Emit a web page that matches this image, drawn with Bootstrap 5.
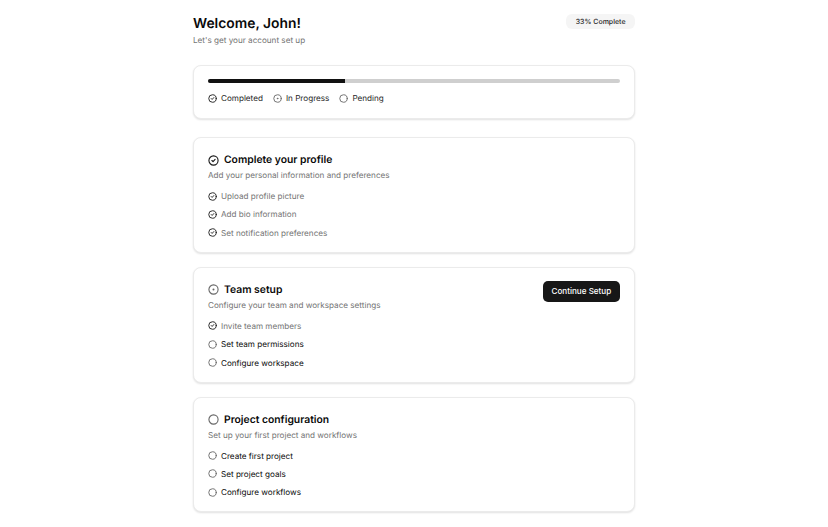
<!DOCTYPE html>
<html lang="en">

<head>
    <meta charset="UTF-8">
    <meta name="viewport" content="width=device-width, initial-scale=1">
    <title>Welcome</title>
    <link href="https://cdn.jsdelivr.net/npm/bootstrap@5.3.0/dist/css/bootstrap.min.css" rel="stylesheet">
    <style>
        body { font-family: Inter, "Liberation Sans", sans-serif; color: #0a0a0a; background: #fff; text-rendering: geometricPrecision; }
        .page-wrap { width: 442px; margin: 0 auto; padding-top: 14px; }
        .page-head { margin-bottom: 18px; }
        .page-title { font-size: 13.85px; font-weight: 600; line-height: 18px; margin: 1px 0 0; }
        .page-sub { font-size: 8.15px; line-height: 14px; color: #737373; }
        .pct-pill { background: #f5f5f5; border-radius: 6px; font-size: 7px; font-weight: 500; line-height: 9px; padding: 3px 9.5px; height: 15px; color: #262626; }
        .step-card { border: 1px solid #ebebeb; border-radius: 8px; box-shadow: 0 1px 2px rgba(0, 0, 0, .12); padding: 15px 14px 13px; background: #fff; margin-bottom: 14px; }
        .first-card { padding: 13px 14px 14px; margin-bottom: 18px; }
        .track { height: 4px; background: #cfcfcf; border-radius: 2px; overflow: hidden; }
        .track-fill { height: 100%; background: #111; }
        .legend-row { margin-top: 9px; font-size: 8.15px; line-height: 12px; color: #262626; gap: 10px; }
        .step-title { font-size: 10.35px; font-weight: 600; line-height: 14px; margin: 0; }
        .step-sub { font-size: 8.15px; line-height: 12px; color: #737373; margin-top: 2px; }
        .task-list { margin-top: 9px; display: flex; flex-direction: column; gap: 6.4px; font-size: 8.15px; line-height: 12px; }
        .task-row { display: flex; align-items: center; gap: 4px; }
        .head-row { display: flex; align-items: center; gap: 5px; }
        .task-done { color: #737373; }
        .ico { flex: none; fill: none; stroke: #171717; stroke-width: 2.4; stroke-linecap: round; stroke-linejoin: round; }
        .ico-muted { stroke: #666; }
        .btn-setup { background: #171717; color: #fff; font-size: 8.1px; font-weight: 500; line-height: 12px; padding: 4px 8.75px; border-radius: 5px; border: 0; height: 21px; margin-top: -2px; }
        .btn-setup:hover { background: #171717; color: #fff; }
    </style>
</head>

<body>
    <svg class="d-none">
        <symbol id="i-done" viewBox="0 0 24 24"><circle cx="12" cy="12" r="10"/><path d="m8.5 12 2.5 2.5 4.5-5"/></symbol>
        <symbol id="i-prog" viewBox="0 0 24 24"><circle cx="12" cy="12" r="10"/><circle cx="12" cy="12" r="1"/></symbol>
        <symbol id="i-todo" viewBox="0 0 24 24"><circle cx="12" cy="12" r="10"/></symbol>
    </svg>

    <div class="page-wrap">
        <div class="page-head d-flex justify-content-between align-items-start">
            <div>
                <h1 class="page-title">Welcome, John!</h1>
                <div class="page-sub">Let's get your account set up</div>
            </div>
            <span class="pct-pill">33% Complete</span>
        </div>

        <div class="step-card first-card">
            <div class="track"><div class="track-fill" style="width: 33.33%"></div></div>
            <div class="legend-row d-flex">
                <div class="task-row"><svg class="ico" width="9" height="9"><use href="#i-done"/></svg>Completed</div>
                <div class="task-row"><svg class="ico ico-muted" width="9" height="9"><use href="#i-prog"/></svg>In Progress</div>
                <div class="task-row"><svg class="ico ico-muted" width="9" height="9"><use href="#i-todo"/></svg>Pending</div>
            </div>
        </div>

        <div class="step-card">
            <div class="head-row"><svg class="ico" width="11" height="11"><use href="#i-done"/></svg><h2 class="step-title">Complete your profile</h2></div>
            <div class="step-sub">Add your personal information and preferences</div>
            <div class="task-list">
                <div class="task-row task-done"><svg class="ico" width="9" height="9"><use href="#i-done"/></svg>Upload profile picture</div>
                <div class="task-row task-done"><svg class="ico" width="9" height="9"><use href="#i-done"/></svg>Add bio information</div>
                <div class="task-row task-done"><svg class="ico" width="9" height="9"><use href="#i-done"/></svg>Set notification preferences</div>
            </div>
        </div>

        <div class="step-card">
            <div class="d-flex justify-content-between align-items-start">
                <div>
                    <div class="head-row"><svg class="ico ico-muted" width="11" height="11"><use href="#i-prog"/></svg><h2 class="step-title">Team setup</h2></div>
                    <div class="step-sub">Configure your team and workspace settings</div>
                </div>
                <button type="button" class="btn btn-setup">Continue Setup</button>
            </div>
            <div class="task-list">
                <div class="task-row task-done"><svg class="ico" width="9" height="9"><use href="#i-done"/></svg>Invite team members</div>
                <div class="task-row"><svg class="ico ico-muted" width="9" height="9"><use href="#i-todo"/></svg>Set team permissions</div>
                <div class="task-row"><svg class="ico ico-muted" width="9" height="9"><use href="#i-todo"/></svg>Configure workspace</div>
            </div>
        </div>

        <div class="step-card">
            <div class="head-row"><svg class="ico ico-muted" width="11" height="11"><use href="#i-todo"/></svg><h2 class="step-title">Project configuration</h2></div>
            <div class="step-sub">Set up your first project and workflows</div>
            <div class="task-list">
                <div class="task-row"><svg class="ico ico-muted" width="9" height="9"><use href="#i-todo"/></svg>Create first project</div>
                <div class="task-row"><svg class="ico ico-muted" width="9" height="9"><use href="#i-todo"/></svg>Set project goals</div>
                <div class="task-row"><svg class="ico ico-muted" width="9" height="9"><use href="#i-todo"/></svg>Configure workflows</div>
            </div>
        </div>
    </div>

    <script src="https://cdn.jsdelivr.net/npm/bootstrap@5.3.0/dist/js/bootstrap.bundle.min.js"></script>
</body>

</html>
